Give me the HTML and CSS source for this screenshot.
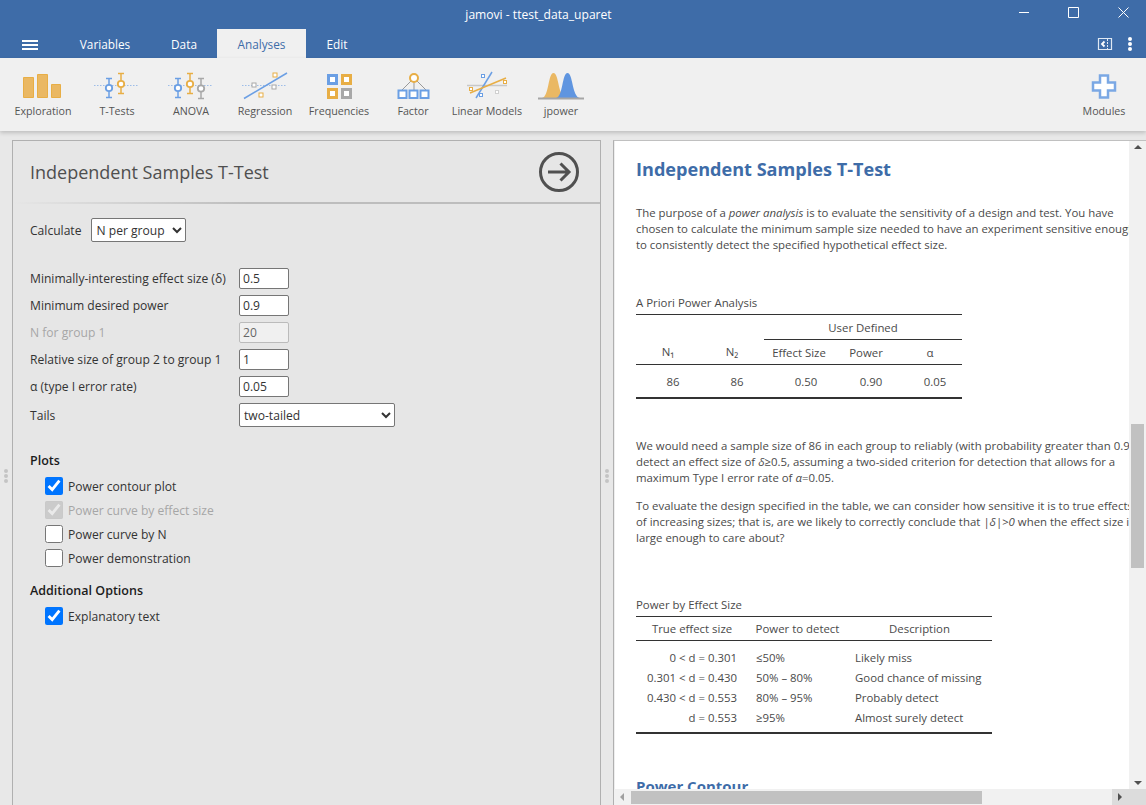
FILE: index.html
```html
<!DOCTYPE html>
<html lang="en">

<head>
    <meta charset="UTF-8">
    <title>jamovi - ttest_data_uparet</title>
    <link rel="stylesheet" href="styles.css">
</head>

<body>
    <div class="app">
        <header class="titlebar">
            <span class="title">jamovi - ttest_data_uparet</span>
            <div class="winbtns">
                <svg width="50" height="29" viewBox="0 0 50 29"><path class="win" d="M20 12.500h10"/></svg>
                <svg width="50" height="29" viewBox="0 0 50 29"><path class="win" d="M19.500 7.500h10v10h-10z"/></svg>
                <svg width="50" height="29" viewBox="0 0 50 29"><path class="win" d="M19.500 7.500l10 10M29.500 7.500l-10 10"/></svg>
            </div>
        </header>

        <nav class="tabbar">
            <div class="burger"><i></i><i></i><i></i></div>
            <a class="tab tab-variables">Variables</a>
            <a class="tab tab-data">Data</a>
            <a class="tab tab-analyses">Analyses</a>
            <a class="tab tab-edit">Edit</a>
            <div class="tabtools">
                <svg width="16" height="14" viewBox="0 0 16 14">
                    <path class="tool" d="M1.500 1.500h13v11h-13z"/>
                    <path class="toolthin" d="M10.500 2v10"/>
                    <path class="tool thick" d="M7.500 4.500l-2.500 2.500 2.500 2.500"/>
                </svg>
                <div class="dots"><i></i><i></i><i></i></div>
            </div>
        </nav>

        <section class="ribbon">
            <div class="rib">
                <svg class="ico" viewBox="0 0 74 34">
                    <path class="barfill" d="M17.500 7.500h10v20h-10zM31.500 4.500h10v23h-10zM45.500 14.500h9v13h-9z"/>
                </svg>
                <span>Exploration</span>
            </div>
            <div class="rib">
                <svg class="ico" viewBox="0 0 74 34">
                    <path class="dotline" d="M14 15.500h45"/>
                    <path class="blue" d="M29 8v20M26 8.500h6M26 27.500h6"/>
                    <circle class="blue hole" cx="29" cy="18" r="3.200"/>
                    <path class="orange" d="M41 3v21M38 3.500h6M38 23.500h6"/>
                    <circle class="orange hole" cx="41" cy="14" r="3.200"/>
                </svg>
                <span>T-Tests</span>
            </div>
            <div class="rib">
                <svg class="ico" viewBox="0 0 74 34">
                    <path class="dotline" d="M14 15.500h45"/>
                    <path class="blue" d="M24 8v20M21 8.500h6M21 27.500h6"/>
                    <circle class="blue hole" cx="24" cy="18" r="3.200"/>
                    <path class="orange" d="M36 3v21M33 3.500h6M33 23.500h6"/>
                    <circle class="orange hole" cx="36" cy="14" r="3.200"/>
                    <path class="gray" d="M47 8v21M44 8.500h6M44 28.500h6"/>
                    <circle class="gray hole" cx="47" cy="18.500" r="3.200"/>
                </svg>
                <span>ANOVA</span>
            </div>
            <div class="rib">
                <svg class="ico" viewBox="0 0 74 34">
                    <path class="dotline" d="M14 15.500h45"/>
                    <path class="blue" d="M16 28.500L59 3"/>
                    <rect class="gray hole" x="24" y="13" width="4" height="4"/>
                    <rect class="orange hole" x="45" y="3" width="4" height="4"/>
                    <rect class="gray hole" x="44" y="15" width="4" height="4"/>
                    <rect class="orange hole" x="31" y="23" width="4" height="4"/>
                </svg>
                <span>Regression</span>
            </div>
            <div class="rib">
                <svg class="ico" viewBox="0 0 74 34">
                    <rect class="sq blue" x="26.500" y="5.500" width="8" height="8"/>
                    <rect class="sq orange" x="40.500" y="5.500" width="8" height="8"/>
                    <rect class="sq orange" x="26.500" y="19.500" width="8" height="8"/>
                    <rect class="sq gray" x="40.500" y="19.500" width="8" height="8"/>
                </svg>
                <span>Frequencies</span>
            </div>
            <div class="rib">
                <svg class="ico" viewBox="0 0 74 34">
                    <path class="linkline" d="M38 8L26 20M38 8v12M38 8l12 12"/>
                    <circle class="orange hole wide" cx="38" cy="8" r="4"/>
                    <rect class="blue hole wide" x="22.500" y="20.500" width="8" height="7.500"/>
                    <rect class="blue hole wide" x="33.500" y="20.500" width="8" height="7.500"/>
                    <rect class="blue hole wide" x="44.500" y="20.500" width="8" height="7.500"/>
                </svg>
                <span>Factor</span>
            </div>
            <div class="rib">
                <svg class="ico" viewBox="0 0 74 34">
                    <path class="graysolid" d="M17 15.500h40"/>
                    <path class="blue" d="M26 28L42 2"/>
                    <path class="orange" d="M20 23l36-15"/>
                    <rect class="orange hole" x="19.500" y="17.500" width="3" height="3"/>
                    <rect class="blue hole" x="31.500" y="4.500" width="3" height="3"/>
                    <rect class="orange hole" x="53.500" y="10.500" width="3" height="3"/>
                    <rect class="blue hole" x="29.500" y="23.500" width="3" height="3"/>
                    <rect class="faint hole" x="45.500" y="20.500" width="3" height="3"/>
                </svg>
                <span>Linear Models</span>
            </div>
            <div class="rib">
                <svg class="ico" viewBox="0 0 74 34">
                    <path class="bell-o" d="M18 28C25 27 24 3 29.500 3C35 3 34 27 42 28z"/>
                    <path class="bell-b" d="M32 28C39 27 38 3 43.500 3C49 3 48 27 56 28z"/>
                    <path class="baseline" d="M14 28.500h46"/>
                </svg>
                <span>jpower</span>
            </div>
            <div class="rib rib-modules">
                <svg class="ico" viewBox="0 0 74 34">
                    <path class="plus" d="M33 5.500h8v7h7v8h-7v7h-8v-7h-7v-8h7z"/>
                </svg>
                <span>Modules</span>
            </div>
        </section>

        <main class="workspace">
            <div class="splitter splitter-left"><i></i><i></i><i></i></div>

            <section class="options">
                <div class="opt-head">
                    <h2>Independent Samples T-Test</h2>
                    <svg width="42" height="42" viewBox="0 0 42 42">
                        <circle class="go" cx="21" cy="21" r="18.500"/>
                        <path class="go" d="M10 21h21M22.500 12.500L31 21l-8.500 8.500"/>
                    </svg>
                </div>
                <div class="opt-line"></div>

                <div class="calc-row">
                    <label>Calculate</label>
                    <select class="sel-calc"><option>N per group</option></select>
                </div>

                <div class="param-list">
                    <div class="param"><label>Minimally-interesting effect size (δ)</label><input type="text" value="0.5"></div>
                    <div class="param"><label>Minimum desired power</label><input type="text" value="0.9"></div>
                    <div class="param off"><label>N for group 1</label><input type="text" value="20" disabled></div>
                    <div class="param"><label>Relative size of group 2 to group 1</label><input type="text" value="1"></div>
                    <div class="param"><label>α (type I error rate)</label><input type="text" value="0.05"></div>
                    <div class="param param-tails"><label>Tails</label><select class="sel-tails"><option>two-tailed</option></select></div>
                </div>

                <h3 class="group-plots">Plots</h3>
                <label class="chk"><input type="checkbox" checked>Power contour plot</label>
                <label class="chk off"><input type="checkbox" checked disabled>Power curve by effect size</label>
                <label class="chk"><input type="checkbox">Power curve by N</label>
                <label class="chk"><input type="checkbox">Power demonstration</label>

                <h3 class="group-extra">Additional Options</h3>
                <label class="chk"><input type="checkbox" checked>Explanatory text</label>
            </section>

            <div class="splitter"><i></i><i></i><i></i></div>

            <section class="results">
                <div class="res-view">
                    <h1>Independent Samples T-Test</h1>
                    <p class="p-intro">The purpose of a <em>power analysis</em> is to evaluate the sensitivity of a design and test. You have<br>
                        chosen to calculate the minimum sample size needed to have an experiment sensitive enough<br>
                        to consistently detect the specified hypothetical effect size.</p>

                    <div class="cap cap-first">A Priori Power Analysis</div>
                    <table class="t-apriori">
                        <colgroup><col class="c64"><col class="c64"><col class="c70"><col class="c64"><col class="c64"></colgroup>
                        <tr class="r-span"><th colspan="2" class="nob"></th><th colspan="3">User Defined</th></tr>
                        <tr class="r-head"><th>N₁</th><th>N₂</th><th>Effect Size</th><th>Power</th><th>α</th></tr>
                        <tr class="r-data"><td>86</td><td>86</td><td class="wider">0.50</td><td>0.90</td><td>0.05</td></tr>
                    </table>

                    <p class="p-need">We would need a sample size of 86 in each group to reliably (with probability greater than 0.9)<br>
                        detect an effect size of <em>δ</em>≥0.5, assuming a two-sided criterion for detection that allows for a<br>
                        maximum Type I error rate of <em>α</em>=0.05.</p>
                    <p class="p-eval">To evaluate the design specified in the table, we can consider how sensitive it is to true effects<br>
                        of increasing sizes; that is, are we likely to correctly conclude that <em>|δ|&gt;0</em> when the effect size is<br>
                        large enough to care about?</p>

                    <div class="cap cap-second">Power by Effect Size</div>
                    <table class="t-effect">
                        <colgroup><col class="c112"><col class="c99"><col class="c145"></colgroup>
                        <tr class="r-head2"><th>True effect size</th><th>Power to detect</th><th>Description</th></tr>
                        <tr class="first"><td class="rt">0 &lt; d = 0.301</td><td>≤50%</td><td>Likely miss</td></tr>
                        <tr><td class="rt">0.301 &lt; d = 0.430</td><td>50% – 80%</td><td>Good chance of missing</td></tr>
                        <tr><td class="rt">0.430 &lt; d = 0.553</td><td>80% – 95%</td><td>Probably detect</td></tr>
                        <tr class="last"><td class="rt">d = 0.553</td><td>≥95%</td><td>Almost surely detect</td></tr>
                    </table>

                    <h1 class="h-contour">Power Contour</h1>
                </div>

                <div class="vbar">
                    <span class="arr arr-up"></span>
                    <div class="vthumb"></div>
                    <span class="arr arr-down"></span>
                </div>
                <div class="hbar">
                    <span class="arr arr-left"></span>
                    <div class="hthumb"></div>
                    <div class="hend"><span class="arr arr-right"></span></div>
                </div>
                <div class="corner"></div>
            </section>
        </main>
    </div>
</body>

</html>
```

FILE: styles.css
```css
* {
    box-sizing: border-box;
}

body {
    margin: 0;
    font-family: "Open Sans", "Noto Sans", sans-serif;
    font-size: 12px;
    color: #333;
    background: #e8e8e8;
}

.app {
    width: 1146px;
    height: 805px;
    display: flex;
    flex-direction: column;
    overflow: hidden;
}

/* title + tabs */
.titlebar {
    height: 29px;
    background: #3e6ca8;
    color: #fff;
    display: flex;
    justify-content: center;
    align-items: center;
    position: relative;
    font-size: 12.100px;
    padding-right: 69px;
}

.winbtns {
    position: absolute;
    top: 0;
    right: -3px;
    display: flex;
}

.win {
    fill: none;
    stroke: #fff;
    stroke-width: 1;
}

.tabbar {
    height: 29px;
    background: #3e6ca8;
    display: flex;
    color: #fff;
    font-size: 11.800px;
    position: relative;
}

.burger {
    width: 16px;
    margin: 11px 0 0 22px;
}

.burger i {
    display: block;
    height: 2px;
    background: #fff;
    margin-bottom: 2px;
}

.tab {
    line-height: 31px;
    text-align: center;
}

.tab-variables {
    width: 92px;
    margin-left: 21px;
}

.tab-data {
    width: 66px;
}

.tab-analyses {
    width: 89px;
    background: #f0f0f0;
    color: #3e6ca8;
}

.tab-edit {
    width: 62px;
}

.tabtools {
    margin-left: auto;
    margin-right: 14px;
    display: flex;
    align-items: center;
    gap: 15px;
    padding-top: 1px;
}

.tool {
    fill: none;
    stroke: #dfe8f3;
    stroke-width: 1.200;
}

.tool.thick {
    stroke: #fff;
    stroke-width: 1.800;
}

.toolthin {
    stroke: #dfe8f3;
    stroke-dasharray: 2 1;
}

.dots i {
    display: block;
    width: 4px;
    height: 4px;
    border-radius: 50%;
    background: #fff;
    margin-bottom: 1px;
}

/* ribbon */
.ribbon {
    height: 73px;
    background: #f0f0f0;
    display: flex;
    padding-left: 6px;
    box-shadow: 0 2px 4px rgba(0, 0, 0, 0.18);
    position: relative;
    z-index: 1;
}

.rib {
    width: 74px;
    text-align: center;
    color: #555;
    padding-top: 12px;
}

.rib span {
    display: block;
    line-height: 16px;
    margin-top: -1px;
    white-space: nowrap;
    font-size: 10.700px;
}

.ico {
    display: block;
    width: 74px;
    height: 34px;
}

.rib-modules {
    margin-left: auto;
    margin-right: 5px;
}

.barfill {
    fill: #eab863;
    stroke: #e8ae45;
}

.blue,
.orange,
.gray,
.linkline,
.graysolid,
.faint {
    fill: none;
    stroke-width: 1.500;
}

.blue {
    stroke: #6b9fe4;
}

.orange {
    stroke: #e8ae45;
}

.gray {
    stroke: #a8a8a8;
}

.faint {
    stroke: #d0d0d0;
    stroke-width: 1;
}

.hole {
    fill: #fff;
    stroke-width: 1;
}

circle.hole {
    stroke-width: 1.800;
}

.hole.wide {
    stroke-width: 2;
}

.dotline {
    fill: none;
    stroke: #9dbde8;
    stroke-dasharray: 1.500 1.500;
}

.graysolid {
    stroke: #c8c8c8;
}

.linkline {
    stroke: #999;
    stroke-width: 1;
}

.sq {
    fill: #fff;
    stroke-width: 3;
}

.bell-o {
    fill: #eab863;
}

.bell-b {
    fill: #5f95e0;
}

.baseline {
    stroke: #a6a6a6;
    stroke-width: 2;
}

.plus {
    fill: #fff;
    stroke: #7ba8e4;
    stroke-width: 2.500;
}

/* main area */
.workspace {
    flex: 1;
    display: flex;
    padding-top: 9px;
    min-height: 0;
}

.options {
    width: 589px;
    background: #e6e6e6;
    border: 1px solid #b0b0b0;
    border-bottom: 0;
    padding: 0 17px;
    font-size: 12.100px;
    color: #333;
}

.opt-head {
    display: flex;
    justify-content: space-between;
    align-items: center;
    height: 61px;
    margin-right: 3px;
}

.opt-head h2 {
    margin: 0;
    font-weight: normal;
    font-size: 18px;
    color: #4f4f4f;
}

.go {
    fill: none;
    stroke: #505050;
    stroke-width: 3;
}

.opt-line {
    height: 2px;
    margin: 0 -17px;
    background: linear-gradient(to right, #e6e6e6, #bdbdbd 40%);
}

.calc-row {
    display: flex;
    align-items: center;
    gap: 10px;
    margin-top: 14px;
}

select,
input[type="text"] {
    font: inherit;
    color: #333;
    background: #fff;
    border: 1px solid #767676;
    border-radius: 2px;
    height: 21px;
    padding: 0 3px;
}

select {
    padding: 0;
}

.sel-calc {
    width: 95px;
    height: 24px;
}

.param-list {
    margin-top: 26px;
}

.param {
    display: flex;
    align-items: center;
    height: 21px;
    margin-bottom: 6px;
}

.param label {
    width: 209px;
}

.param input {
    width: 50px;
}

.param.off label {
    color: #a6a6a6;
}

.param input:disabled {
    background: #f0f0f0;
    border-color: #bbb;
    color: #666;
}

.param-tails {
    height: 24px;
}

.sel-tails {
    width: 156px;
    height: 24px;
}

h3 {
    margin: 0;
    font-size: 12.500px;
    font-weight: 600;
    color: #1c1c1c;
    line-height: 18px;
}

.group-plots {
    margin-top: 25px;
}

.group-extra {
    margin-top: 15px;
}

.chk {
    display: flex;
    align-items: center;
    height: 18px;
    margin: 6px 0 0 15px;
    color: #333;
}

h3 + .chk {
    margin-top: 7px;
}

.chk input {
    width: 18px;
    height: 18px;
    margin: 0 5px 0 0;
}

.chk.off {
    color: #a6a6a6;
}

.splitter {
    width: 12px;
    padding-top: 329px;
}

.splitter i {
    display: block;
    width: 4px;
    height: 4px;
    border-radius: 50%;
    background: #c4c4c4;
    margin: 0 0 1px 4px;
}

/* results */
.results {
    flex: 1;
    min-width: 0;
    display: grid;
    grid-template-columns: 1fr 17px;
    grid-template-rows: 1fr 16px;
    border-left: 1px solid #b0b0b0;
    border-top: 1px solid #c0c0c0;
}

.res-view {
    background: #fff;
    border-left: 1px solid #eee;
    padding-left: 21px;
    overflow: hidden;
    white-space: nowrap;
    color: #4a4a4a;
}

h1 {
    margin: 15px 0 0;
    font-size: 18.100px;
    line-height: 26px;
    font-weight: 700;
    color: #3e6ca8;
}

p {
    margin: 0;
    line-height: 16px;
    font-size: 11.400px;
}

.p-intro {
    margin-top: 23px;
}

.p-need {
    margin-top: 39px;
}

.p-eval {
    margin-top: 12px;
}

.cap {
    line-height: 16px;
    font-size: 11.400px;
}

.cap-first {
    margin-top: 42px;
}

.cap-second {
    margin-top: 51px;
}

table {
    border-collapse: collapse;
    table-layout: fixed;
    font-size: 11.400px;
    margin-top: 3px;
}

th,
td {
    padding: 0;
    font-weight: normal;
    text-align: center;
}

.t-apriori {
    width: 326px;
    border-top: 1px solid #333;
    border-bottom: 2px solid #333;
}

.c64 {
    width: 64px;
}

.c70 {
    width: 70px;
}

.r-span {
    height: 25px;
}

.r-span th {
    border-bottom: 1px solid #333;
}

.r-span .nob {
    border-bottom: 0;
}

.r-head {
    height: 25px;
    border-bottom: 1px solid #333;
}

.r-data {
    height: 33px;
}

.r-data td {
    padding: 1px 0 0 10px;
}

.r-data td.wider {
    padding-left: 14px;
}

.t-effect {
    width: 356px;
    border-top: 1px solid #333;
    border-bottom: 2px solid #333;
}

.c112 {
    width: 112px;
}

.c99 {
    width: 99px;
}

.c145 {
    width: 145px;
}

.r-head2 {
    height: 24px;
    border-bottom: 1px solid #333;
}

.t-effect td {
    text-align: left;
    height: 20px;
    padding-left: 8px;
}

.t-effect td.rt {
    text-align: right;
    padding: 0 11px 0 0;
}

.t-effect .first td {
    height: 27px;
    padding-top: 7px;
}

.t-effect .last td {
    height: 26px;
    padding-bottom: 5px;
}

.h-contour {
    margin-top: 39px;
    font-size: 15px;
}

/* fake scrollbars */
.vbar {
    background: #f1f1f1;
    position: relative;
    padding: 0 2px;
}

.vthumb {
    height: 144px;
    margin-top: 283px;
    background: #c1c1c1;
}

.hbar {
    background: #f1f1f1;
    display: flex;
    padding-left: 17px;
    position: relative;
}

.hthumb {
    width: 351px;
    height: 13px;
    margin-top: 2px;
    background: #c1c1c1;
}

.hend {
    width: 17px;
    margin-left: auto;
    background: #dcdcdc;
    position: relative;
}

.corner {
    background: #dcdcdc;
}

.arr {
    position: absolute;
    width: 0;
    height: 0;
    border: 4px solid transparent;
}

.arr-up {
    top: 0;
    left: 5px;
    border-bottom-color: #505050;
}

.arr-down {
    bottom: 0;
    left: 5px;
    border-top-color: #505050;
}

.arr-left {
    top: 4px;
    left: 2px;
    border-right-color: #a0a0a0;
}

.arr-right {
    top: 4px;
    left: 6px;
    border-left-color: #505050;
}
```
